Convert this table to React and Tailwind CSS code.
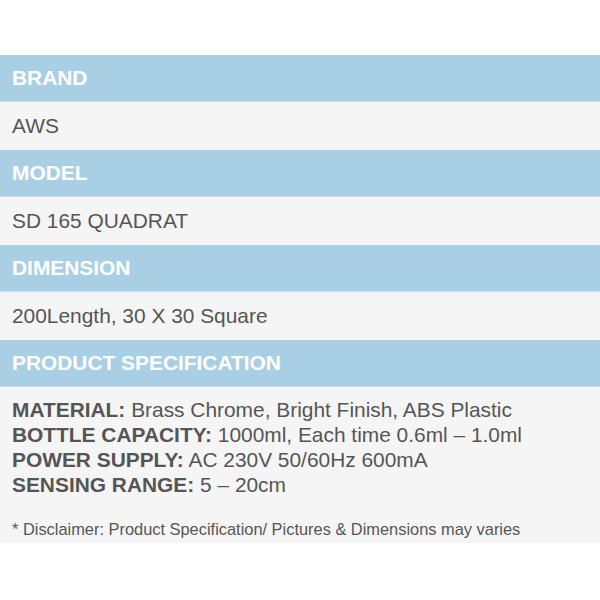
export default function App() {
  const font = { fontFamily: '"Liberation Sans", Arial, sans-serif' };
  const Header = ({ children }) => (
    <div className="h-[47px] bg-[#a9cfe4] flex items-center px-[12px] text-white font-bold text-[20.9px] leading-none border-b border-[#c9e0ec]">
      {children}
    </div>
  );
  const Row = ({ children }) => (
    <div className="h-[48px] bg-[#f5f5f5] flex items-center px-[12px] text-[#555555] text-[20.9px] leading-none">
      {children}
    </div>
  );
  return (
    <div className="w-[600px] h-[600px] bg-white pt-[55px]" style={font}>
      <Header>BRAND</Header>
      <Row>AWS</Row>
      <Header>MODEL</Header>
      <Row>SD 165 QUADRAT</Row>
      <Header>DIMENSION</Header>
      <Row>200Length, 30 X 30 Square</Row>
      <Header>PRODUCT SPECIFICATION</Header>
      <div className="h-[156px] bg-[#f5f5f5] px-[12px] pt-[10px] text-[#555555]">
        <div className="text-[20.9px] leading-[25px]">
          <div><span className="font-bold">MATERIAL:</span> Brass Chrome, Bright Finish, ABS Plastic</div>
          <div><span className="font-bold">BOTTLE CAPACITY:</span> 1000ml, Each time 0.6ml – 1.0ml</div>
          <div><span className="font-bold">POWER SUPPLY:</span> AC 230V 50/60Hz 600mA</div>
          <div><span className="font-bold">SENSING RANGE:</span> 5 – 20cm</div>
        </div>
        <div className="mt-[22px] text-[16.4px] leading-[20px]">
          * Disclaimer: Product Specification/ Pictures &amp; Dimensions may varies
        </div>
      </div>
    </div>
  );
}
